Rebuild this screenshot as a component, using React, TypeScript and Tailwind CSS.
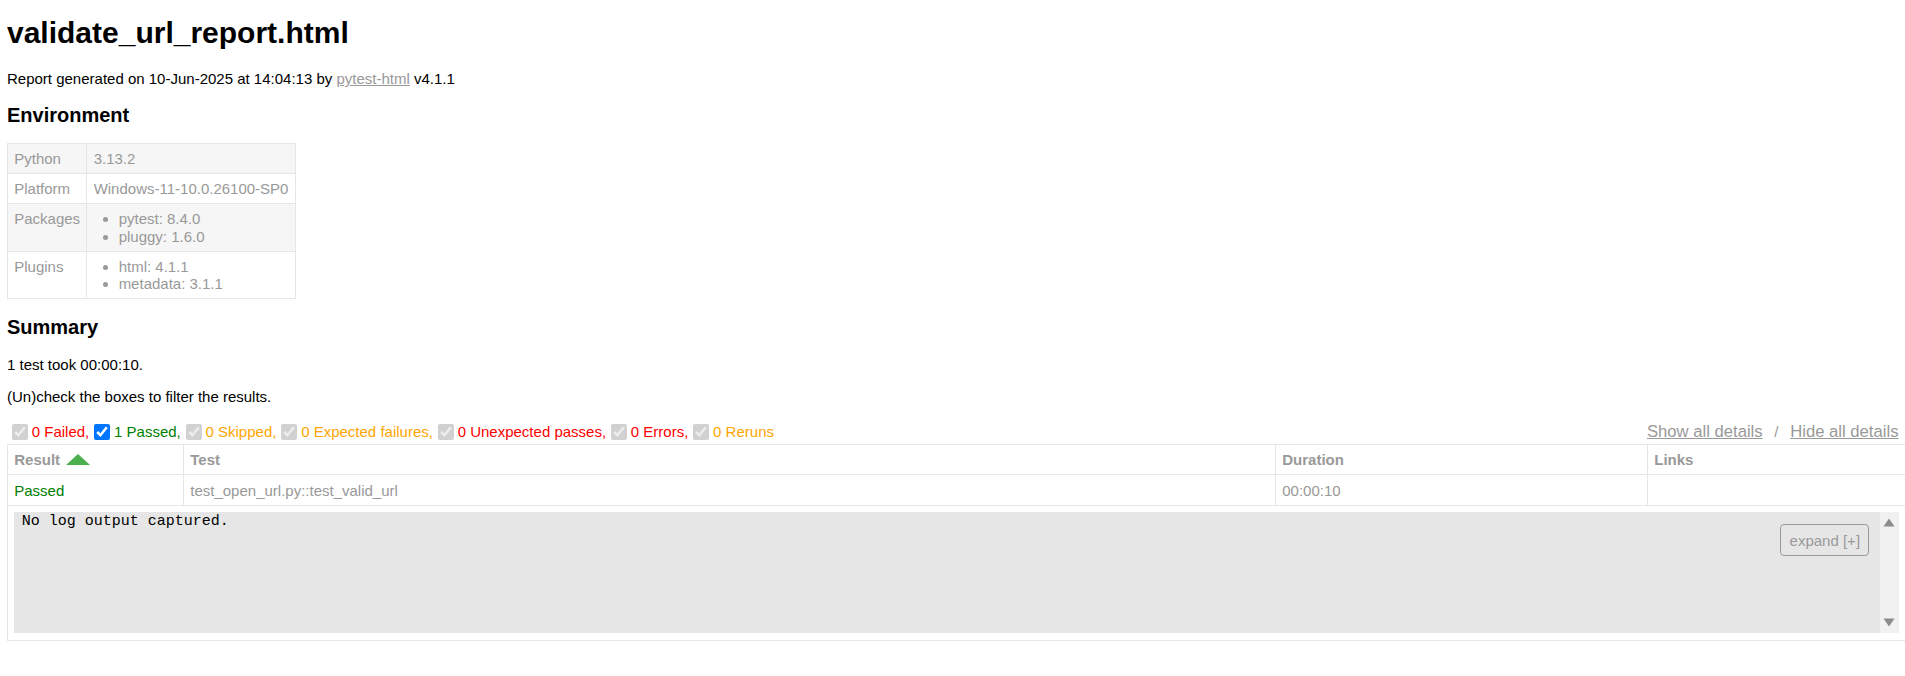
import React from "react";

function Filter({ checked, disabled, label, color }: { checked: boolean; disabled: boolean; label: string; color: string }) {
  return (
    <>
      <input
        type="checkbox"
        defaultChecked={checked}
        disabled={disabled}
        className="my-[3.75px] ml-[5px] mr-[3.75px] h-[16px] w-[16px] shrink-0"
      />
      <span className={color}>{label}</span>
    </>
  );
}

function EnvCell({ children }: { children: React.ReactNode }) {
  return <td className="border border-[#e6e6e6] px-[6.25px] py-[6px] align-top">{children}</td>;
}

export default function App() {
  return (
    <div className="min-h-[676px] w-[1905px] overflow-hidden bg-white font-['Liberation_Sans',Arial,sans-serif] text-[15px] leading-[1.15] text-[#999]">
      <div className="ml-[7px] w-[1899px] pt-[15.6px]">
        <h1 className="text-[30px] font-bold leading-[34.5px] text-black">validate_url_report.html</h1>
        <p className="mt-[20px] text-black">
          Report generated on 10-Jun-2025 at 14:04:13 by{" "}
          <a className="text-[#999] underline">pytest-html</a> v4.1.1
        </p>
        <h2 className="mt-[16.6px] text-[20px] font-bold leading-[23px] text-black">Environment</h2>
        <table className="mt-[16px] border-collapse">
          <tbody>
            <tr className="bg-[#f6f6f6]">
              <EnvCell>Python</EnvCell>
              <EnvCell>3.13.2</EnvCell>
            </tr>
            <tr>
              <EnvCell>Platform</EnvCell>
              <EnvCell>Windows-11-10.0.26100-SP0</EnvCell>
            </tr>
            <tr className="bg-[#f6f6f6]">
              <EnvCell>Packages</EnvCell>
              <EnvCell>
                <ul className="m-0 list-disc px-[25px]">
                  <li>pytest: 8.4.0</li>
                  <li>pluggy: 1.6.0</li>
                </ul>
              </EnvCell>
            </tr>
            <tr>
              <EnvCell>Plugins</EnvCell>
              <EnvCell>
                <ul className="m-0 list-disc px-[25px]">
                  <li>html: 4.1.1</li>
                  <li>metadata: 3.1.1</li>
                </ul>
              </EnvCell>
            </tr>
          </tbody>
        </table>
        <h2 className="mt-[16.6px] text-[20px] font-bold leading-[23px] text-black">Summary</h2>
        <p className="mt-[16.6px] text-black">1 test took 00:00:10.</p>
        <p className="mt-[15px] text-black">(Un)check the boxes to filter the results.</p>
        <div className="mt-[15px] flex justify-between">
          <div className="flex items-center">
            <Filter checked disabled label="0 Failed," color="text-[#ff0000]" />
            <Filter checked disabled={false} label="1 Passed," color="text-[#008000]" />
            <Filter checked disabled label="0 Skipped," color="text-[#ffa500]" />
            <Filter checked disabled label="0 Expected failures," color="text-[#ffa500]" />
            <Filter checked disabled label="0 Unexpected passes," color="text-[#ff0000]" />
            <Filter checked disabled label="0 Errors," color="text-[#ff0000]" />
            <Filter checked disabled label="0 Reruns" color="text-[#ffa500]" />
          </div>
          <div className="flex items-center">
            <button className="px-[7.5px] py-[1.25px] text-[16.67px] text-[#999] underline">Show all details</button>
            <span>{"\u00a0/\u00a0"}</span>
            <button className="px-[7.5px] py-[1.25px] text-[16.67px] text-[#999] underline">Hide all details</button>
          </div>
        </div>
        <table className="w-full table-fixed border-collapse border border-[#e6e6e6]">
          <colgroup>
            <col className="w-[176px]" />
            <col className="w-[1092px]" />
            <col className="w-[372px]" />
            <col />
          </colgroup>
          <thead>
            <tr>
              <th className="border border-[#e6e6e6] p-[6.25px] text-left font-bold">
                Result
                <svg width="24" height="11" viewBox="0 0 24 11" className="ml-[6.25px] inline-block align-baseline">
                  <polygon points="0,11 12,0 24,11" fill="#4caf50" />
                </svg>
              </th>
              <th className="border border-[#e6e6e6] p-[6.25px] text-left font-bold">Test</th>
              <th className="border border-[#e6e6e6] p-[6.25px] text-left font-bold">Duration</th>
              <th className="border border-[#e6e6e6] p-[6.25px] text-left font-bold">Links</th>
            </tr>
          </thead>
          <tbody>
            <tr>
              <td className="border border-[#e6e6e6] p-[6.25px] text-[#008000]">Passed</td>
              <td className="border border-[#e6e6e6] p-[6.25px]">test_open_url.py::test_valid_url</td>
              <td className="border border-[#e6e6e6] p-[6.25px]">00:00:10</td>
              <td className="border border-[#e6e6e6] p-[6.25px]"></td>
            </tr>
            <tr>
              <td colSpan={4} className="border border-[#e6e6e6] p-[6.25px]">
                <div className="flex h-[121px]">
                  <div className="flex flex-1 items-start bg-[#e6e6e6]">
                    <pre className="flex-1 whitespace-pre-wrap pl-[7.5px] pt-[1px] font-['Liberation_Mono','Courier_New',monospace] text-[15px] leading-[17px] text-black">
                      No log output captured.
                    </pre>
                    <div className="mr-[10.3px] mt-[12px] rounded-[4px] border border-[#999] px-[8.4px] py-[6.2px] text-[#999]">
                      expand [+]
                    </div>
                  </div>
                  <div className="flex w-[19px] flex-col items-center justify-between bg-[#f1f1f1] py-[6px]">
                    <svg width="12" height="9" viewBox="0 0 12 9">
                      <polygon points="0.5,8.5 6,0.5 11.5,8.5" fill="#8c8c8c" />
                    </svg>
                    <svg width="12" height="9" viewBox="0 0 12 9">
                      <polygon points="0.5,0.5 11.5,0.5 6,8.5" fill="#8c8c8c" />
                    </svg>
                  </div>
                </div>
              </td>
            </tr>
          </tbody>
        </table>
      </div>
    </div>
  );
}
